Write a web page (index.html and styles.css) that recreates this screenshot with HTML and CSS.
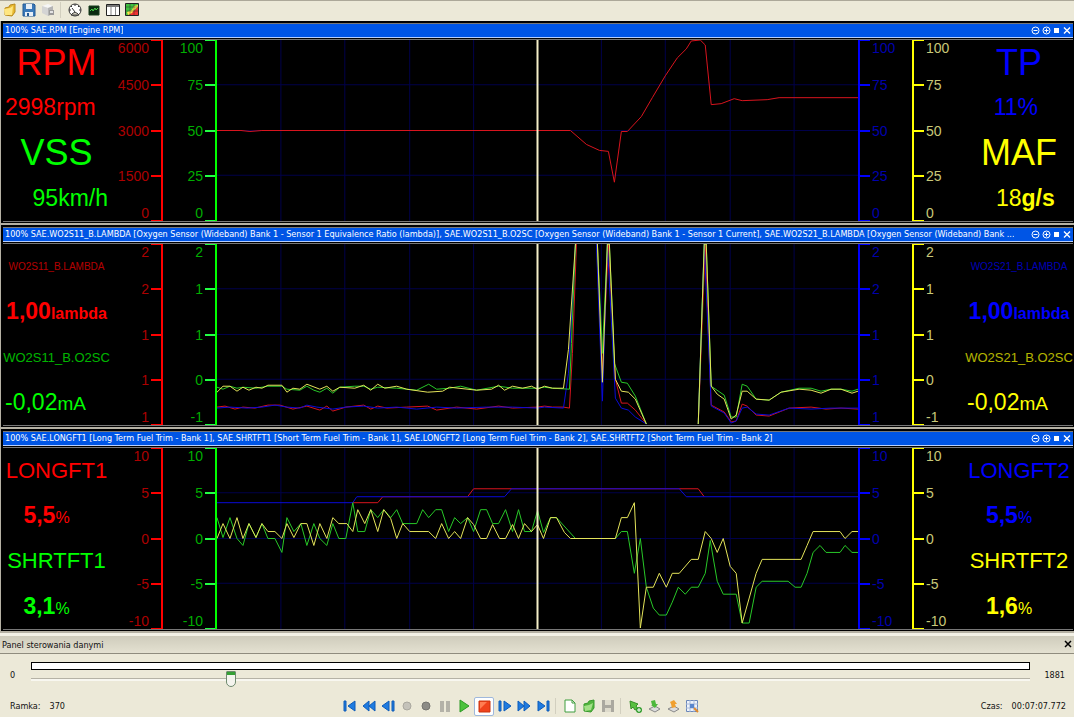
FILE: index.html
```html
<!DOCTYPE html>
<html lang="pl">
<head>
    <meta charset="UTF-8">
    <meta name="viewport" content="width=device-width, initial-scale=1.0">
    <title>Panel sterowania danymi</title>
    <link rel="stylesheet" href="styles.css">
</head>
<body>
    <!-- icons used more than once -->
    <svg class="defs" aria-hidden="true">
        <symbol id="win-icons" viewBox="0 0 40 11">
            <g fill="none" stroke="#fff">
                <circle cx="4.500" cy="5.500" r="3.500"/>
                <path d="M2.500 5.500h4"/>
                <circle cx="15.500" cy="5.500" r="3.500"/>
                <path d="M13.500 5.500h4M15.500 3.500v4"/>
                <path d="M33 2.500l6 6M39 2.500l-6 6" stroke-width="1.400"/>
            </g>
            <path d="M23 3h5v5h-5z" fill="#fff"/>
        </symbol>
        <symbol id="grid" viewBox="0 0 642 182" preserveAspectRatio="none">
            <path class="grid-lines" d="M64 0v182M128 0v182M193 0v182M257 0v182M321 0v182M385 0v182M449 0v182M514 0v182M578 0v182M0 45h642M0 91h642M0 136h642"/>
        </symbol>
    </svg>

    <div class="toolbar">
        <button aria-label="Open"><svg viewBox="0 0 16 16"><path d="M3 6l4-1 1-2 5-1v8l-3 4-7-1z" fill="#e8b930" stroke="#b98a1c"/><path d="M2 7l6-1 3-2-1 9-7 0z" fill="#ffe680"/></svg></button>
        <button aria-label="Save"><svg viewBox="0 0 16 16"><path d="M2 2h11l1 1v11H2z" fill="#3a78b8" stroke="#245a94"/><path d="M5 2h6v5H5zM4 10h8v4H4z" fill="#e6eef6"/><path d="M6 11h2v3H6z" fill="#245a94"/></svg></button>
        <button aria-label="Export"><svg viewBox="0 0 16 16"><path d="M2 4l6-2 5 2-5 2z" fill="#f6f6f6"/><path d="M2 4l6 2v8l-6-3z" fill="#d4d4d4"/><path d="M8 6l5-2v8l-5 2z" fill="#b4b4b4"/><path d="M9 8h5v5H9z" fill="#9a9a9a"/><path d="M10 9h3v2h-3z" fill="#e4e4e4"/></svg></button>
        <span class="separator"></span>
        <button aria-label="Gauges"><svg viewBox="0 0 16 16"><circle cx="8" cy="8" r="6" fill="#fff" stroke="#333"/><path d="M8 2v2M2 8h2M12 8h2M4 4l1 1M12 4l-1 1M8 10l-3-4" stroke="#333" fill="none"/><path d="M4 13q4-5 8 0z" fill="#ece9d8" stroke="#333"/></svg></button>
        <button aria-label="Scope"><svg viewBox="0 0 16 16"><path d="M3 4h10v9H3z" fill="#0a2a10" stroke="#173c1c"/><path d="M4 9l2-2 1 2 2-3 1 2 2-2" stroke="#4bd34b" fill="none"/></svg></button>
        <button aria-label="Table"><svg viewBox="0 0 16 16"><path d="M1.500 2.500h13v11h-13z" fill="#fff" stroke="#222"/><path d="M2 3h12v2H2z" fill="#777"/><path d="M6 5v8M10.500 5v8" stroke="#888"/></svg></button>
        <button aria-label="Map"><svg viewBox="0 0 16 16"><path d="M1.500 1.500h13v12h-13z" fill="#3fc03f" stroke="#222"/><path d="M14 4v9H5l3-3 3-2z" fill="#e33"/><path d="M3 10l5-2 2-4 4-1v2l-3 2-3 4-4 2z" fill="#ffe14a"/><path d="M2 5h12M2 9h12M6 2v11M10 2v11" stroke="#222" stroke-opacity=".4"/></svg></button>
    </div>

    <main class="scopes">
        <section class="scope">
            <header class="scope-title">
                <h2>100% SAE.RPM [Engine RPM]</h2>
                <svg class="win-icons"><use href="#win-icons"/></svg>
            </header>
            <div class="scope-body">
                <div class="readout">
                    <span class="name-xl red">RPM</span>
                    <span class="value red at-start">2998rpm</span>
                    <span class="name-xl green">VSS</span>
                    <span class="value green at-end">95km/h</span>
                </div>
                <ol class="axis left red"><li>6000</li><li>4500</li><li>3000</li><li>1500</li><li>0</li></ol>
                <ol class="axis left green"><li>100</li><li>75</li><li>50</li><li>25</li><li>0</li></ol>
                <svg class="plot" viewBox="0 0 642 182" preserveAspectRatio="none">
                    <use href="#grid"/>
                    <polyline class="red" points="0,91 24,91 33,92 45,91 354,91 370,105 383,111 392,112 398,143 405,92 411,92 425,77 436,58 449,36 461,18 470,9 475,1 484,0 489,5 495,65 505,64 518,59 526,61 551,60 563,58 642,58"/>
                    <path class="cursor" d="M321 0v182"/>
                </svg>
                <ol class="axis right blue"><li>100</li><li>75</li><li>50</li><li>25</li><li>0</li></ol>
                <ol class="axis right yellow"><li>100</li><li>75</li><li>50</li><li>25</li><li>0</li></ol>
                <div class="readout">
                    <span class="name-xl blue">TP</span>
                    <span class="value blue">11% </span>
                    <span class="name-xl yellow">MAF</span>
                    <span class="value yellow">  18<b>g/s</b></span>
                </div>
            </div>
        </section>

        <section class="scope">
            <header class="scope-title">
                <h2>100% SAE.WO2S11_B.LAMBDA [Oxygen Sensor (Wideband) Bank 1 - Sensor 1 Equivalence Ratio (lambda)], SAE.WO2S11_B.O2SC [Oxygen Sensor (Wideband) Bank 1 - Sensor 1 Current], SAE.WO2S21_B.LAMBDA [Oxygen Sensor (Wideband) Bank ...</h2>
                <svg class="win-icons"><use href="#win-icons"/></svg>
            </header>
            <div class="scope-body">
                <div class="readout">
                    <span class="name-xs red dim">WO2S11_B.LAMBDA</span>
                    <b class="value red">1,00<small>lambda</small></b>
                    <span class="name-s green dim">WO2S11_B.O2SC</span>
                    <span class="value green at-start">-0,02<small class="unit-l">mA</small></span>
                </div>
                <ol class="axis left red"><li>2</li><li>2</li><li>1</li><li>1</li><li>1</li></ol>
                <ol class="axis left green"><li>2</li><li>1</li><li>1</li><li>0</li><li>-1</li></ol>
                <svg class="plot" viewBox="0 0 642 182" preserveAspectRatio="none">
                    <use href="#grid"/>
                    <polyline class="red" points="0,164 8,163 18,166 26,164 38,165 51,162 63,162 76,166 90,163 103,167 110,163 116,168 129,164 147,162 154,166 161,163 170,165 190,164 211,163 220,167 240,164 260,166 282,163 296,165 321,164 328,163 336,164 347,164 353,165 356,110 360,0"/>
                    <polyline class="red" points="381,0 386,130 392,0 399,136 405,160 411,160 419,167 430,181"/>
                    <polyline class="red" points="482,181 489,0 495,162 508,169 515,179 520,178 526,161 531,163 540,172 553,173 573,165 595,164 610,166 625,165 642,166"/>
                    <polyline class="blue" points="0,165 13,164 30,165 45,164 58,162 70,164 83,165 90,162 100,164 116,166 129,164 147,163 161,165 180,164 200,166 220,164 240,165 270,164 296,164 321,165 328,164 347,165 352,130 359,0"/>
                    <polyline class="blue" points="380,0 386,158 391,0 399,155 405,165 412,167 419,174 430,181"/>
                    <polyline class="blue" points="482,181 488,0 495,163 508,170 515,180 520,178 526,165 531,164 540,171 553,172 573,165 595,166 615,165 642,165"/>
                    <polyline class="green" points="0,144 6,146 13,143 20,145 26,144 39,145 51,143 65,143 70,146 83,147 90,143 97,147 103,149 110,145 116,150 123,144 138,143 147,143 154,146 161,144 180,145 200,147 212,141 220,146 233,145 244,143 260,147 282,143 296,145 321,145 328,144 336,145 353,146 355,100 359,0"/>
                    <polyline class="green" points="381,0 386,110 391,0 393,0 398,120 405,139 411,140 419,153 430,181"/>
                    <polyline class="green" points="482,181 488,0 490,0 495,143 508,152 515,174 520,174 526,141 531,143 540,156 553,157 565,149 583,145 595,145 605,148 615,146 625,146 636,148 642,146"/>
                    <polyline class="yellow" points="0,149 6,143 13,143 20,148 26,144 32,147 39,144 45,145 51,142 65,142 70,149 76,145 83,146 90,141 103,146 110,143 116,148 123,144 138,145 147,142 154,147 161,141 168,145 180,143 190,146 211,149 226,148 233,144 260,147 275,146 282,142 288,147 296,143 306,145 315,143 321,146 328,143 336,145 347,145 352,106 359,0"/>
                    <polyline class="yellow" points="381,0 386,139 391,0 393,0 399,136 405,148 412,149 419,156 430,181"/>
                    <polyline class="yellow" points="482,181 488,0 490,0 495,143 501,151 508,156 515,176 520,172 526,148 531,148 540,156 553,157 565,149 583,146 595,147 605,150 615,146 625,146 636,150 642,148"/>
                    <path class="cursor" d="M321 0v182"/>
                </svg>
                <ol class="axis right blue"><li>2</li><li>2</li><li>1</li><li>1</li><li>1</li></ol>
                <ol class="axis right yellow"><li>2</li><li>1</li><li>1</li><li>0</li><li>-1</li></ol>
                <div class="readout">
                    <span class="name-xs blue dim">WO2S21_B.LAMBDA</span>
                    <b class="value blue">1,00<small>lambda</small></b>
                    <span class="name-s yellow dim">WO2S21_B.O2SC</span>
                    <span class="value yellow at-start">-0,02<small class="unit-l">mA</small></span>
                </div>
            </div>
        </section>

        <section class="scope">
            <header class="scope-title">
                <h2>100% SAE.LONGFT1 [Long Term Fuel Trim - Bank 1], SAE.SHRTFT1 [Short Term Fuel Trim - Bank 1], SAE.LONGFT2 [Long Term Fuel Trim - Bank 2], SAE.SHRTFT2 [Short Term Fuel Trim - Bank 2]</h2>
                <svg class="win-icons"><use href="#win-icons"/></svg>
            </header>
            <div class="scope-body">
                <div class="readout">
                    <span class="name red">LONGFT1</span>
                    <span class="value red percent"><b>5,5</b><small>%</small></span>
                    <span class="name green">SHRTFT1</span>
                    <span class="value green percent"><b>3,1</b><small>%</small></span>
                </div>
                <ol class="axis left red"><li>10</li><li>5</li><li>0</li><li>-5</li><li>-10</li></ol>
                <ol class="axis left green"><li>10</li><li>5</li><li>0</li><li>-5</li><li>-10</li></ol>
                <svg class="plot" viewBox="0 0 642 182" preserveAspectRatio="none">
                    <use href="#grid"/>
                    <polyline class="red" points="136,55 161,55 166,49 251,49 257,41 482,41 488,49"/>
                    <polyline class="blue" points="0,55 136,55 140,49 288,49 295,41 463,41 470,49 642,49"/>
                    <polyline class="green" points="0,70 6,90 13,70 20,91 26,98 32,76 39,90 45,76 51,91 58,91 65,105 70,70 77,84 84,76 90,98 97,76 103,91 110,98 116,76 122,91 129,91 136,55 141,84 148,84 154,62 161,70 167,62 174,70 180,62 186,76 200,76 206,62 212,70 219,62 225,62 232,84 238,70 244,76 251,70 257,84 264,62 270,62 276,76 282,76 289,62 296,84 302,62 308,84 315,84 321,63 327,85 334,70 340,70 359,91 399,91 405,84 411,84 418,126 424,91 430,140 437,161 443,168 450,168 456,155 462,140 469,147 475,140 482,140 489,126 494,93 501,134 507,147 520,147 526,176 533,176 540,140 546,134 572,134 579,140 585,140 591,126 597,105 604,98 610,105 624,105 629,98 636,105 642,105"/>
                    <polyline class="yellow" points="0,91 6,76 13,91 20,70 26,91 32,76 39,90 45,76 51,84 58,84 65,91 70,76 77,90 84,76 90,76 97,98 103,76 110,91 116,70 122,76 130,76 136,84 141,62 148,76 154,62 161,84 167,62 174,71 180,91 186,76 193,84 212,84 219,91 225,76 232,91 238,84 244,91 251,70 257,77 264,91 270,91 276,77 283,91 289,91 296,77 302,91 308,76 315,84 321,77 327,91 334,70 340,70 348,85 354,91 399,91 405,70 411,70 418,55 424,181 430,140 437,140 443,126 450,140 456,126 463,126 475,112 482,112 489,84 495,91 501,105 507,91 514,119 520,126 526,176 540,126 546,112 585,112 591,98 597,84 624,84 629,91 636,84 642,84"/>
                    <path class="cursor" d="M321 0v182"/>
                </svg>
                <ol class="axis right blue"><li>10</li><li>5</li><li>0</li><li>-5</li><li>-10</li></ol>
                <ol class="axis right yellow"><li>10</li><li>5</li><li>0</li><li>-5</li><li>-10</li></ol>
                <div class="readout">
                    <span class="name blue">LONGFT2</span>
                    <span class="value blue percent"><b>5,5</b><small>%</small></span>
                    <span class="name yellow">SHRTFT2</span>
                    <span class="value yellow percent"><b>1,6</b><small>%</small></span>
                </div>
            </div>
        </section>
    </main>

    <footer class="control-panel">
        <header class="control-title">
            <h2>Panel sterowania danymi</h2>
            <button class="close" aria-label="Zamknij"><svg viewBox="0 0 9 9"><path d="M1 1l6 6M7 1l-6 6" stroke="#000" stroke-width="1.500"/></svg></button>
        </header>
        <div class="timeline">
            <label for="frame">0</label>
            <div class="tracks">
                <div class="buffer"></div>
                <input type="range" id="frame" min="0" max="1881" value="370">
            </div>
            <span class="last-frame">1881</span>
        </div>
        <div class="playback">
            <span class="frame-info">Ramka:<span>370</span></span>
            <div class="buttons">
                <button aria-label="First"><svg viewBox="0 0 16 16" class="nav"><path d="M2 3h2v10H2zM13 3v10L6 8z"/></svg></button>
                <button aria-label="Rewind"><svg viewBox="0 0 16 16" class="nav"><path d="M8 3v10L2 8zM14 3v10L8 8z"/></svg></button>
                <button aria-label="Step back"><svg viewBox="0 0 16 16" class="nav"><path d="M9 3v10L2 8zM12 3h2v10h-2z"/></svg></button>
                <button aria-label="Record" disabled><svg viewBox="0 0 16 16"><circle cx="8" cy="8" r="4" fill="#c4c2ba" stroke="#aaa89f"/></svg></button>
                <button aria-label="Record stop" disabled><svg viewBox="0 0 16 16"><circle cx="8" cy="8" r="4" fill="#8c8b86" stroke="#75746f"/></svg></button>
                <button aria-label="Pause" disabled><svg viewBox="0 0 16 16"><path d="M3 3h4v11H3zM9 3h4v11H9z" fill="#b4b2a8"/></svg></button>
                <button aria-label="Play"><svg viewBox="0 0 16 16"><path d="M4 2l9 6-9 6z" fill="#4cc23c" stroke="#2c9a24"/></svg></button>
                <button class="pressed" aria-label="Stop"><svg viewBox="0 0 16 16"><path d="M3 3h11v11H3z" fill="#f0431c" stroke="#c8340f"/><path d="M4 4h7l-7 7z" fill="#ff7d52"/></svg></button>
                <button aria-label="Step forward"><svg viewBox="0 0 16 16" class="nav"><path d="M2 3h2v10H2zM7 3l7 5-7 5z"/></svg></button>
                <button aria-label="Fast forward"><svg viewBox="0 0 16 16" class="nav"><path d="M2 3l6 5-6 5zM8 3l6 5-6 5z"/></svg></button>
                <button aria-label="Last"><svg viewBox="0 0 16 16" class="nav"><path d="M3 3l7 5-7 5zM12 3h2v10h-2z"/></svg></button>
                <span class="separator"></span>
                <button aria-label="New"><svg viewBox="0 0 16 16"><path d="M3 2h7l3 3v9H3z" fill="#fff" stroke="#3f9e3f"/><path d="M10 2v3h3" fill="none" stroke="#3f9e3f"/></svg></button>
                <button aria-label="Open log"><svg viewBox="0 0 16 16"><path d="M3 6l4-1 1-2 5-1v8l-3 4-7-1z" fill="#53b53f" stroke="#379a2c"/><path d="M3 8l5-1 4-2-2 7-6 1z" fill="#a4e088"/></svg></button>
                <button aria-label="Save log" disabled><svg viewBox="0 0 16 16"><path d="M2 2h12v12H2z" fill="#aaa89f"/><path d="M5 2h6v5H5zM5 10h6v4H5z" fill="#dedbcc"/></svg></button>
                <span class="separator"></span>
                <button aria-label="Add marker"><svg viewBox="0 0 16 16"><path d="M3 3l8 3-2 2 2 3-3 1-2-3-2 2z" fill="#58c040" stroke="#358f28"/><circle cx="12" cy="12" r="3" fill="#2f9c2a"/><path d="M12 10v4M10 12h4" stroke="#fff"/></svg></button>
                <button aria-label="Import"><svg viewBox="0 0 16 16"><path d="M3 11l6-3 5 3-5 3z" fill="#ddd" stroke="#888"/><path d="M5 3l4-1 1 4 2 0-3 4-4-3 1 0z" fill="#4cb83c"/></svg></button>
                <button aria-label="Export log"><svg viewBox="0 0 16 16"><path d="M3 11l6-3 5 3-5 3z" fill="#ddd" stroke="#888"/><path d="M5 4l4-2 3 4-2 0 1 3-4 1-1-4z" fill="#f0a030"/></svg></button>
                <button aria-label="Settings"><svg viewBox="0 0 16 16"><path d="M2.500 2.500h11v11h-11z" fill="#eef3fb" stroke="#6a86b8"/><path d="M2 6h12M2 10h12M6 2v12M10 2v12" stroke="#a6b8da"/><path d="M6 6h4v4H6z" fill="#5a86cc"/><path d="M10 10l4 4" stroke="#e08a2c" stroke-width="2"/></svg></button>
            </div>
            <span class="time-info">Czas:<span>00:07:07.772</span></span>
        </div>
    </footer>
</body>
</html>
```
FILE: styles.css
```css
* {
    box-sizing: border-box;
}
body {
    margin: 0;
    height: 100vh;
    display: flex;
    flex-direction: column;
    background-color: #ece9d8;
    color: #111;
    font-family: "DejaVu Sans Condensed", "DejaVu Sans", sans-serif;
    font-size: 9px;
}
h2 {
    margin: 0;
    font-size: 9px;
    font-weight: normal;
}
button {
    display: flex;
    align-items: center;
    justify-content: center;
    width: 19px;
    height: 19px;
    padding: 0;
    border: none;
    background: none;
}
button svg {
    width: 16px;
    height: 16px;
}
.defs {
    position: absolute;
    width: 0;
    height: 0;
}
.red { color: #f00; }
.green { color: #0f0; }
.blue { color: #00f; }
.yellow { color: #ff0; }

/* top toolbar */
.toolbar {
    display: flex;
    align-items: center;
    height: 21px;
    padding-bottom: 2px;
    border-top: 1px solid #aca899;
}
.separator {
    width: 1px;
    height: 16px;
    margin: 0 4px 0 3px;
    background-color: #d2cfbf;
}

/* scopes */
.scopes {
    flex: 1;
    min-height: 0;
    display: flex;
    flex-direction: column;
    padding-left: 1px;
    background-color: #b5b1a4;
}
.scope {
    flex: 1;
    min-height: 0;
    display: flex;
    flex-direction: column;
    margin-bottom: 2px;
    border: solid #000;
    border-width: 2px 1px 1px 2px;
    background-color: #000;
}
.scope-title {
    display: flex;
    align-items: center;
    justify-content: space-between;
    height: 15px;
    padding: 0 2px;
    border-top: 1px solid #777;
    border-bottom: 1px solid #b8d0ff;
    background-color: #0055e5;
    color: #fff;
}
.scope-title h2 {
    overflow: hidden;
    white-space: nowrap;
    line-height: 13px;
}
.win-icons {
    flex: none;
    width: 40px;
    height: 11px;
}
.scope-body {
    flex: 1;
    min-height: 0;
    margin-top: 1px;
    display: grid;
    grid-template-columns: 107px 53px 54px 1fr 54px 53px 108px;
    grid-template-rows: 100%;
    border-top: 1px solid #777;
    border-bottom: 1px solid #777;
    font-family: "Liberation Sans", Arial, sans-serif;
}
.readout {
    display: grid;
    grid-template-rows: repeat(4, 1fr);
    align-items: center;
    text-align: center;
    white-space: pre;
}
.name-xl { font-size: 36px; line-height: 36px; }
.name { font-size: 22px; }
.name-s { font-size: 13px; }
.name-xs { font-size: 10px; }
.value { font-size: 23px; }
.value small { font-size: 16px; }
.value .unit-l { font-size: 19px; }
.dim { opacity: 0.7; }
.at-start { text-align: left; padding-left: 2px; }
.at-end { text-align: right; padding-right: 2px; }
.percent { padding-right: 20px; }

/* axis: labels sit on the quarter lines, the end ones are pulled inside */
.axis {
    display: flex;
    flex-direction: column;
    margin: 0;
    padding: 0;
    list-style: none;
    font-size: 14px;
    line-height: 16px;
}
.axis li {
    flex: 2;
    position: relative;
    display: flex;
    align-items: center;
    color: color-mix(in srgb, currentColor 68%, black);
}
.axis li:first-child {
    flex: 1;
    align-items: flex-start;
}
.axis li:last-child {
    flex: 1;
    align-items: flex-end;
}
.axis li::after {
    content: "";
    position: absolute;
    top: calc(50% - 1px);
    width: 10px;
    height: 2px;
}
.axis li:first-child::after {
    top: 0;
    height: 1px;
}
.axis li:last-child::after {
    top: auto;
    bottom: 0;
    height: 1px;
}
.axis.red li::after { background-color: #f00; }
.axis.green li::after { background-color: #2f4; }
.axis.blue li::after { background-color: #00f; }
.axis.yellow li::after { background-color: #ff0; }
.axis.yellow li { color: #c8c878; }
.left {
    border-right: 2px solid;
}
.left li {
    justify-content: flex-end;
    padding-right: 12px;
}
.left li::after {
    right: 0;
}
.right {
    border-left: 2px solid;
}
.right li {
    padding-left: 12px;
}
.right li::after {
    left: 0;
}

.plot {
    display: block;
    width: 100%;
    height: 100%;
}
.plot polyline {
    fill: none;
    stroke: currentColor;
    vector-effect: non-scaling-stroke;
}
.plot .red { color: #d8141e; }
.plot .green { color: #28c828; }
.plot .blue { color: #0a0ad8; }
.plot .yellow { color: #e4e45a; }
.grid-lines {
    stroke: #00004a;
    vector-effect: non-scaling-stroke;
}
.cursor {
    stroke: #f4efc8;
    stroke-width: 2;
}

/* bottom panel */
.control-panel {
    height: 84px;
}
.control-title {
    display: flex;
    align-items: center;
    justify-content: space-between;
    height: 21px;
    padding: 0 1px 0 2px;
    border-top: 3px solid #f3f1e6;
    border-bottom: 1px solid #8f8c7e;
    background: linear-gradient(#cfccbc, #e4e1d1);
}
.close {
    width: 9px;
    height: 9px;
}
.close svg {
    width: 9px;
    height: 9px;
}
.timeline {
    display: grid;
    grid-template-columns: 21px 1fr 35px;
    align-items: center;
    height: 42px;
    padding: 0 9px 0 10px;
}
.tracks {
    display: flex;
    flex-direction: column;
    gap: 1px;
}
.buffer {
    height: 8px;
    border: 1px solid #000;
    background-color: #fff;
}
.last-frame {
    text-align: right;
}
input[type="range"] {
    appearance: none;
    width: 100%;
    height: 18px;
    margin: 0;
    background: none;
}
input[type="range"]::-webkit-slider-runnable-track {
    height: 3px;
    border-top: 1px solid #b5b2a5;
    background-color: #f8f7f0;
}
input[type="range"]::-webkit-slider-thumb {
    appearance: none;
    width: 10px;
    height: 16px;
    margin-top: -8px;
    background: linear-gradient(#35a035 3px, #f4f4ee 3px);
    border: 1px solid #6f8a6f;
    border-radius: 1px 1px 5px 5px;
}
.playback {
    display: flex;
    align-items: center;
    height: 20px;
    padding: 0 8px 0 10px;
}
.playback span span {
    margin-left: 9px;
}
.frame-info {
    width: 330px;
}
.buttons {
    display: flex;
    align-items: center;
}
.buttons .pressed {
    width: 20px;
    margin: 0 1px;
    border: 1px solid #9fb8dc;
    border-radius: 2px;
    background-color: #fff;
}
.nav {
    fill: #1f7be0;
    stroke: #0f5cb8;
}
.time-info {
    margin-left: auto;
}
```
